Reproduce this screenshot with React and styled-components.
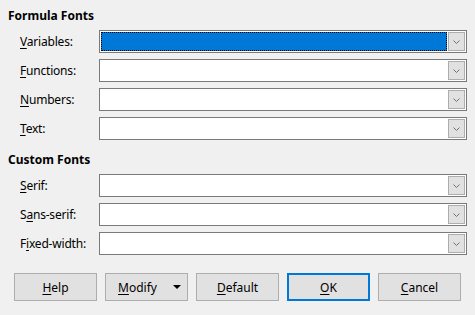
import React from 'react';
import styled, { createGlobalStyle } from 'styled-components';

const Global = createGlobalStyle`
  html, body {
    margin: 0;
    padding: 0;
    background: #f0f0f0;
  }
  body {
    font-family: "Noto Sans", "Liberation Sans", sans-serif;
    font-size: 12px;
    color: #000;
  }
`;

const Dialog = styled.div`
  width: 475px;
  height: 315px;
  box-sizing: border-box;
  padding: 8px 8px 0 8px;
  background: #f0f0f0;
  display: flex;
  flex-direction: column;
`;

const Section = styled.section`
  display: flex;
  flex-direction: column;
  & + & {
    margin-top: 12px;
  }
`;

const Heading = styled.h3`
  margin: 0 0 6px 0;
  height: 16px;
  line-height: 16px;
  font-size: 12px;
  font-weight: bold;
`;

const Rows = styled.div`
  display: flex;
  flex-direction: column;
  gap: 6px;
  padding-left: 12px;
`;

const Row = styled.div`
  display: flex;
  align-items: center;
  height: 23px;
`;

const Label = styled.label`
  width: 79px;
  flex: none;
  line-height: 16px;
  letter-spacing: -0.2px;
`;

const Key = styled.span`
  text-decoration: underline;
  text-underline-offset: 2px;
  text-decoration-thickness: 1px;
`;

const Combo = styled.div`
  width: 368px;
  height: 23px;
  box-sizing: border-box;
  border: 1px solid #7a7a7a;
  background: #fff;
  display: flex;
`;

const Field = styled.div`
  flex: 1;
  margin: ${p => (p.$focused ? '1px 0 1px 1px' : '0')};
  background: ${p => (p.$focused ? '#0078d7' : '#fff')};
  outline: ${p => (p.$focused ? '1px dotted #000' : 'none')};
  outline-offset: -1px;
`;

const DropButton = styled.div`
  width: 17px;
  flex: none;
  box-sizing: border-box;
  border: 1px solid #adadad;
  margin: 1px;
  background: #e1e1e1;
  display: flex;
  align-items: center;
  justify-content: center;
`;

const Buttons = styled.div`
  display: flex;
  gap: 8px;
  margin-top: 18px;
  padding-left: 6px;
`;

const Button = styled.button`
  width: 83px;
  height: 28px;
  box-sizing: border-box;
  padding: 0;
  font: inherit;
  color: #000;
  background: #e1e1e1;
  border: ${p => (p.$default ? '2px solid #0078d7' : '1px solid #adadad')};
  display: flex;
  align-items: center;
  justify-content: center;
`;

const MenuButton = styled(Button)`
  justify-content: flex-start;
  padding-left: 12px;
  gap: 16px;
`;

const Chevron = () => (
  <svg width="7" height="4" viewBox="0 0 7 4">
    <path d="M0.5 0.5 L3.5 3.5 L6.5 0.5" fill="none" stroke="#707070" strokeWidth="1" />
  </svg>
);

const Caret = () => (
  <svg width="8" height="4" viewBox="0 0 8 4">
    <path d="M0 0 H8 L4 4 Z" fill="#000" />
  </svg>
);

const FontRow = ({ k, rest, focused }) => (
  <Row>
    <Label>{k}{rest}</Label>
    <Combo>
      <Field $focused={focused} />
      <DropButton><Chevron /></DropButton>
    </Combo>
  </Row>
);

const u = (c) => <Key>{c}</Key>;

const App = () => (
  <>
    <Global />
    <Dialog>
      <Section>
        <Heading>Formula Fonts</Heading>
        <Rows>
          <FontRow k={u('V')} rest="ariables:" focused />
          <FontRow k={u('F')} rest="unctions:" />
          <FontRow k={u('N')} rest="umbers:" />
          <FontRow k={u('T')} rest="ext:" />
        </Rows>
      </Section>
      <Section>
        <Heading>Custom Fonts</Heading>
        <Rows>
          <FontRow k={u('S')} rest="erif:" />
          <FontRow k={<>S{u('a')}</>} rest="ns-serif:" />
          <FontRow k={<>F{u('i')}</>} rest="xed-width:" />
        </Rows>
      </Section>
      <Buttons>
        <Button><span>{u('H')}elp</span></Button>
        <MenuButton><span>{u('M')}odify</span><Caret /></MenuButton>
        <Button><span>{u('D')}efault</span></Button>
        <Button $default><span>{u('O')}K</span></Button>
        <Button><span>{u('C')}ancel</span></Button>
      </Buttons>
    </Dialog>
  </>
);

export default App;
